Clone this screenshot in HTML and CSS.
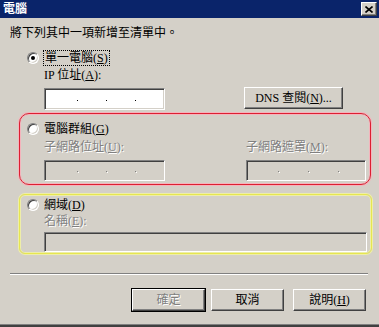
FILE: index.html
```html
<!DOCTYPE html>
<html lang="zh-Hant">
<head>
    <meta charset="UTF-8">
    <title>電腦</title>
    <link rel="stylesheet" href="styles.css">
</head>
<body>
    <div class="window">
        <!-- Barra de título -->
        <div class="titlebar">
            <span class="title">電腦</span>
            <span class="close">
                <svg width="8" height="7" viewBox="0 0 8 7"><path d="M0.5 0.5 L7.5 6.5 M7.5 0.5 L0.5 6.5" stroke="#000" stroke-width="1.6" fill="none"/></svg>
            </span>
        </div>

        <p class="intro">將下列其中一項新增至清單中。</p>

        <!-- Un solo equipo -->
        <div class="opt-single">
            <div class="choice">
                <span class="radio checked"></span>
                <span class="focus">單一電腦(<u>S</u>)</span>
            </div>
            <div class="field-label">IP 位址(<u>A</u>):</div>
            <div class="ip-row">
                <div class="ipbox"><i></i><i></i><i></i></div>
                <span class="btn dns">DNS 查閱(<u>N</u>)...</span>
            </div>
        </div>

        <!-- Grupo de equipos -->
        <div class="group group-red">
            <div class="choice">
                <span class="radio"></span>
                <span>電腦群組(<u>G</u>)</span>
            </div>
            <div class="subnet">
                <div class="field">
                    <div class="field-label disabled">子網路位址(<u>U</u>):</div>
                    <div class="ipbox off"><i></i><i></i><i></i></div>
                </div>
                <div class="field">
                    <div class="field-label disabled">子網路遮罩(<u>M</u>):</div>
                    <div class="ipbox off narrow"><i></i><i></i><i></i></div>
                </div>
            </div>
        </div>

        <!-- Dominio -->
        <div class="group group-yellow">
            <div class="choice">
                <span class="radio"></span>
                <span>網域(<u>D</u>)</span>
            </div>
            <div class="domain">
                <div class="field-label disabled">名稱(<u>E</u>):</div>
                <div class="textbox off"></div>
            </div>
        </div>

        <div class="sep"></div>

        <div class="buttons">
            <span class="btn default disabled">確定</span>
            <span class="btn cancel">取消</span>
            <span class="btn help">說明(<u>H</u>)</span>
        </div>
    </div>
</body>
</html>
```

FILE: styles.css
```css
body {
    margin: 0;
    font-family: "Liberation Serif", "Noto Sans CJK TC", serif;
    font-size: 12px;
    color: #000;
    background-color: #d4d0c8;
}
.window {
    width: 379px;
    height: 327px;
    box-sizing: border-box;
    background-color: #d4d0c8;
    border-bottom: 2px solid #404040;
    box-shadow: inset 0 -1px #808080;
    display: flex;
    flex-direction: column;
    align-items: flex-start;
}
.titlebar {
    width: 100%;
    height: 18px;
    box-sizing: border-box;
    background-color: #0a246a; /* Azul clásico */
    display: flex;
    align-items: center;
    justify-content: space-between;
    padding: 0 2px 0 3px;
}
.title {
    color: #fff;
    font-weight: bold;
    line-height: 14px;
}
.close {
    width: 16px;
    height: 14px;
    box-sizing: border-box;
    background-color: #d4d0c8;
    border: 1px solid;
    border-color: #fff #404040 #404040 #fff;
    box-shadow: inset -1px -1px #808080;
    display: flex;
    align-items: center;
    justify-content: center;
}
.intro {
    margin: 8px 0 0 10px;
    line-height: 14px;
}
.choice {
    display: flex;
    align-items: center;
    gap: 4px;
    height: 14px;
    line-height: 14px;
}
.radio {
    width: 12px;
    height: 12px;
    box-sizing: border-box;
    border-radius: 50%;
    background-color: #fff;
    border: 1px solid;
    border-color: #808080 #fff #fff #808080;
    box-shadow: inset 1px 1px #404040, inset -1px -1px #d4d0c8;
    display: flex;
    align-items: center;
    justify-content: center;
    margin-right: 1px;
}
.radio.checked::after {
    content: "";
    width: 4px;
    height: 4px;
    border-radius: 50%;
    background-color: #000;
}
.focus {
    outline: 1px dotted #000;
    padding: 0 1px;
}
.field-label {
    line-height: 14px;
}
.disabled {
    color: #808080;
    text-shadow: 1px 1px 0 #fff;
}
.opt-single {
    margin: 11px 0 0 27px;
}
.opt-single .field-label {
    margin: 3px 0 0 17px;
}
.ip-row {
    display: flex;
    align-items: flex-start;
    margin: 5px 0 0 17px;
}
.ipbox, .textbox {
    width: 121px;
    height: 22px;
    box-sizing: border-box;
    background-color: #fff;
    border: 1px solid;
    border-color: #808080 #fff #fff #808080;
    box-shadow: inset 1px 1px #404040, inset -1px -1px #d4d0c8;
    display: flex;
    align-items: center;
    gap: 28px;
    padding: 0 0 0 32px;
}
.ip-row .ipbox {
    margin-top: 1px;
}
.ipbox i {
    width: 1px;
    height: 1px;
    margin-top: 2px;
    background-color: #000;
}
.ipbox.off, .textbox.off {
    background-color: #d4d0c8;
}
.ipbox.off i {
    background-color: #808080;
    box-shadow: 1px 1px #fff;
}
.ipbox.narrow {
    width: 120px;
    padding-left: 31px;
    gap: 29px;
}
.btn {
    height: 22px;
    box-sizing: border-box;
    background-color: #d4d0c8;
    border: 1px solid;
    border-color: #fff #404040 #404040 #fff;
    box-shadow: inset -1px -1px #808080;
    display: flex;
    align-items: center;
    justify-content: center;
    line-height: 14px;
}
.dns {
    width: 99px;
    margin-left: 79px;
}
.group {
    margin-left: 19px;
    box-sizing: border-box;
}
.group-red {
    margin-top: 3px;
    width: 352px;
    height: 72px;
    padding: 8px 0 0 7px;
    border: 1px solid #dc1f32;
    border-radius: 10px;
    box-shadow: 0 0 0 1px #f4b4bc, inset 0 0 0 1px #f4b4bc; /* Marca roja */
}
.subnet {
    display: grid;
    grid-template-columns: 202px 120px;
    margin: 4px 0 0 17px;
}
.subnet .ipbox {
    margin-top: 6px;
    height: 21px;
}
.group-yellow {
    margin-top: 9px;
    width: 353px;
    height: 60px;
    padding: 3px 0 0 7px;
    border: 1px solid #e6e650;
    border-radius: 6px;
    box-shadow: 0 0 0 1px #eeeea8, inset 0 0 0 1px #eeeea8; /* Marca amarilla */
}
.domain {
    margin: 2px 0 0 17px;
}
.domain .textbox {
    width: 323px;
    height: 20px;
    margin-top: 4px;
}
.sep {
    margin: 19px 0 0 10px;
    width: 358px;
    border-top: 1px solid #808080;
    border-bottom: 1px solid #fff;
}
.buttons {
    display: flex;
    margin: 14px 0 0 132px;
}
.buttons .btn {
    width: 73px;
}
.default {
    outline: 1px solid #000;
}
.cancel {
    margin-left: 6px;
}
.help {
    margin-left: 9px;
}
```
